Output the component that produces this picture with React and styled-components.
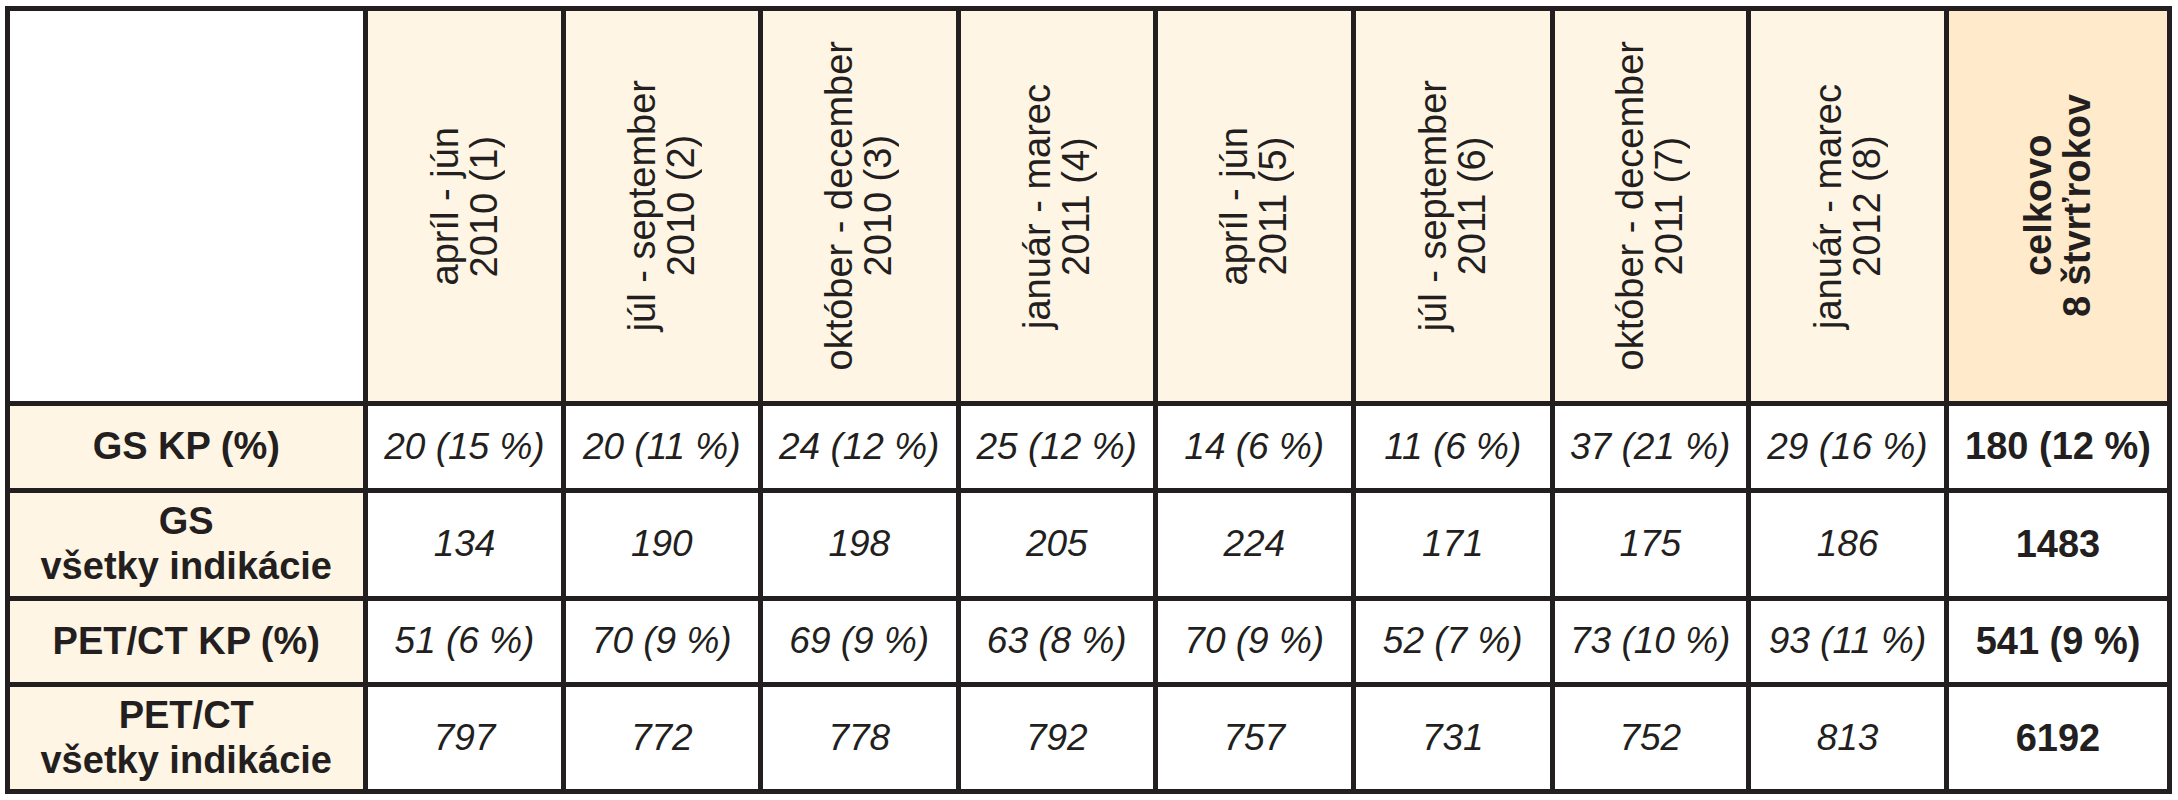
import React from "react";
import styled, { createGlobalStyle } from "styled-components";

const GlobalStyle = createGlobalStyle`
  body {
    margin: 0;
    background: #ffffff;
    font-family: "Liberation Sans", Arial, sans-serif;
    color: #231f20;
  }
`;

const Page = styled.div`
  padding: 6px 0 0 4.5px;
`;

const Table = styled.div`
  display: inline-grid;
  grid-template-columns: 353.5px 193px 191.5px 193.5px 191.5px 193.5px 193.5px 191.5px 193px 218px;
  grid-template-rows: 390px 81.5px 103px 81.5px 102px;
  gap: 5px;
  padding: 5px;
  background: #231f20;
`;

const CornerCell = styled.div`
  background: #ffffff;
`;

const HeaderCell = styled.div`
  background: ${({ $total }) => ($total ? "#ffebcb" : "#fff5e4")};
  display: flex;
  align-items: center;
  justify-content: center;
`;

// vertical-rl + 180deg turn gives text that reads bottom to top
const RotatedText = styled.div`
  writing-mode: vertical-rl;
  transform: rotate(180deg);
  text-align: center;
  font-size: 38px;
  line-height: 39px;
  font-weight: ${({ $bold }) => ($bold ? 700 : 400)};
  white-space: pre;
`;

const LabelCell = styled.div`
  background: #fff5e4;
  display: flex;
  align-items: center;
  justify-content: center;
  text-align: center;
  font-size: 38px;
  line-height: 45px;
  font-weight: 700;
  white-space: pre;
`;

const DataCell = styled.div`
  background: #ffffff;
  display: flex;
  align-items: center;
  justify-content: center;
  font-size: ${({ $bold }) => ($bold ? "38px" : "37px")};
  font-weight: ${({ $bold }) => ($bold ? 700 : 400)};
  font-style: ${({ $bold }) => ($bold ? "normal" : "italic")};
  white-space: nowrap;
`;

const periods = [
  ["apríl - jún", "2010 (1)"],
  ["júl - september", "2010 (2)"],
  ["október - december", "2010 (3)"],
  ["január - marec", "2011 (4)"],
  ["apríl - jún", "2011 (5)"],
  ["júl - september", "2011 (6)"],
  ["október - december", "2011 (7)"],
  ["január - marec", "2012 (8)"],
];

const rows = [
  {
    label: "GS KP (%)",
    values: ["20 (15 %)", "20 (11 %)", "24 (12 %)", "25 (12 %)", "14 (6 %)", "11 (6 %)", "37 (21 %)", "29 (16 %)"],
    total: "180 (12 %)",
  },
  {
    label: "GS\nvšetky indikácie",
    values: ["134", "190", "198", "205", "224", "171", "175", "186"],
    total: "1483",
  },
  {
    label: "PET/CT KP (%)",
    values: ["51 (6 %)", "70 (9 %)", "69 (9 %)", "63 (8 %)", "70 (9 %)", "52 (7 %)", "73 (10 %)", "93 (11 %)"],
    total: "541 (9 %)",
  },
  {
    label: "PET/CT\nvšetky indikácie",
    values: ["797", "772", "778", "792", "757", "731", "752", "813"],
    total: "6192",
  },
];

function App() {
  return (
    <Page>
      <GlobalStyle />
      <Table>
        <CornerCell />
        {periods.map((p, i) => (
          <HeaderCell key={i}>
            <RotatedText>{p.join("\n")}</RotatedText>
          </HeaderCell>
        ))}
        <HeaderCell $total>
          <RotatedText $bold>{"celkovo\n8 štvrťrokov"}</RotatedText>
        </HeaderCell>

        {rows.map((row) => (
          <React.Fragment key={row.label}>
            <LabelCell>{row.label}</LabelCell>
            {row.values.map((v, i) => (
              <DataCell key={i}>{v}</DataCell>
            ))}
            <DataCell $bold>{row.total}</DataCell>
          </React.Fragment>
        ))}
      </Table>
    </Page>
  );
}

export default App;
